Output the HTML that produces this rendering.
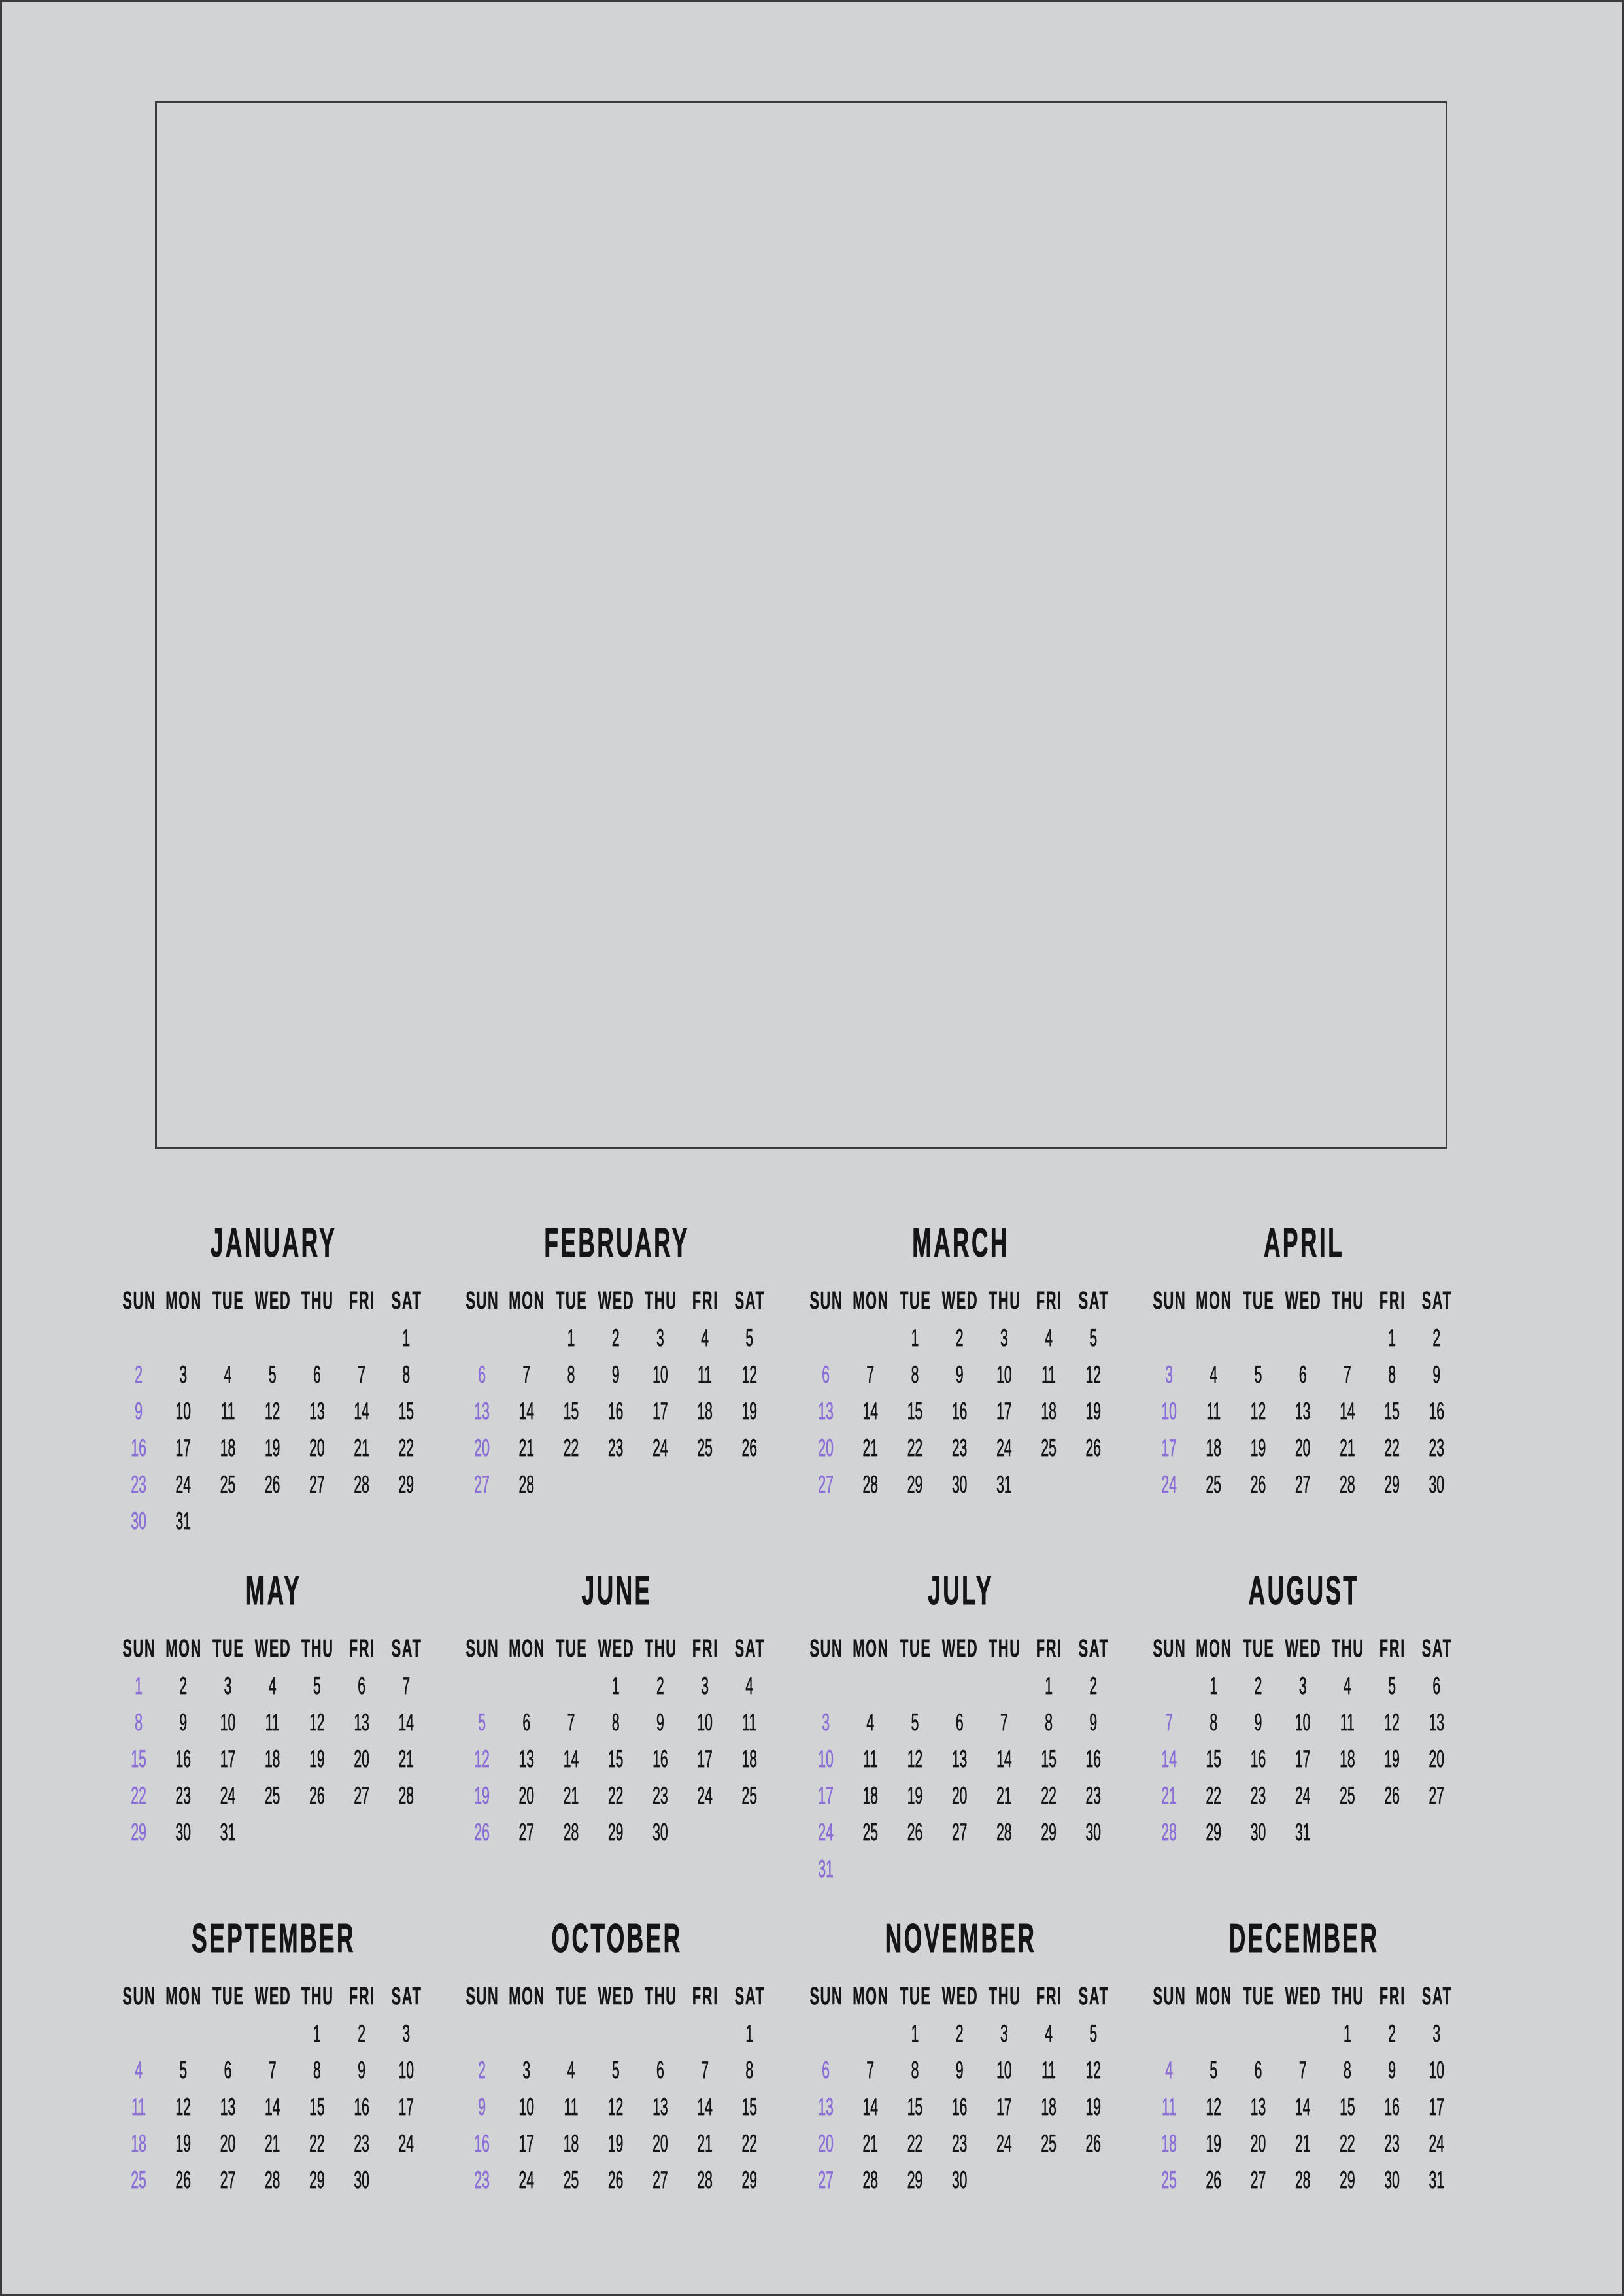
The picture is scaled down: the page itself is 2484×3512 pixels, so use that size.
<!DOCTYPE html>
<html><head><meta charset="utf-8"><style>
*{margin:0;padding:0;box-sizing:border-box}
html,body{width:2484px;height:3512px;overflow:hidden;background:#d2d3d5}
.page{position:absolute;left:0;top:0;width:2484px;height:3512px;border:3px solid #3a3a3c;background:#d2d3d5}
.photo{position:absolute;left:237px;top:155px;width:1977px;height:1603px;border:3px solid #3a3a3c}
.m{position:absolute;width:838px;transform:scaleX(0.57);transform-origin:0 0;font-family:"Liberation Sans",sans-serif;color:#151518}
.t{position:absolute;left:0;top:10.5px;width:838px;text-align:center;font-weight:bold;font-size:62px;line-height:62px;letter-spacing:6px;text-indent:6px;-webkit-text-stroke:1px #151518}
.h{position:absolute;left:0;top:110.5px;display:flex;font-weight:bold;font-size:38px;line-height:38px;-webkit-text-stroke:0.6px #151518}
.h span{width:119.65px;text-align:center;flex:none;letter-spacing:3px;text-indent:3px}
.d{position:absolute;left:0;top:159px;font-size:37px;line-height:56px}
.r{display:flex;height:56px}
.r>*{width:119.65px;flex:none;text-align:center;font-style:normal;font-weight:normal;-webkit-text-stroke:0.8px #151518}
.r>*:first-child{color:#8b6fd6;-webkit-text-stroke:0.8px #8b6fd6}
</style></head><body>
<div class="page"></div>
<div class="photo"></div>

<div class="m" style="left:178px;top:1860px"><div class="t">JANUARY</div>
<div class="h"><span>SUN</span><span>MON</span><span>TUE</span><span>WED</span><span>THU</span><span>FRI</span><span>SAT</span></div>
<div class="d">
<div class="r"><b></b><b></b><b></b><b></b><b></b><b></b><span>1</span></div>
<div class="r"><span>2</span><span>3</span><span>4</span><span>5</span><span>6</span><span>7</span><span>8</span></div>
<div class="r"><span>9</span><span>10</span><span>11</span><span>12</span><span>13</span><span>14</span><span>15</span></div>
<div class="r"><span>16</span><span>17</span><span>18</span><span>19</span><span>20</span><span>21</span><span>22</span></div>
<div class="r"><span>23</span><span>24</span><span>25</span><span>26</span><span>27</span><span>28</span><span>29</span></div>
<div class="r"><span>30</span><span>31</span></div>
</div></div>

<div class="m" style="left:703px;top:1860px"><div class="t">FEBRUARY</div>
<div class="h"><span>SUN</span><span>MON</span><span>TUE</span><span>WED</span><span>THU</span><span>FRI</span><span>SAT</span></div>
<div class="d">
<div class="r"><b></b><b></b><span>1</span><span>2</span><span>3</span><span>4</span><span>5</span></div>
<div class="r"><span>6</span><span>7</span><span>8</span><span>9</span><span>10</span><span>11</span><span>12</span></div>
<div class="r"><span>13</span><span>14</span><span>15</span><span>16</span><span>17</span><span>18</span><span>19</span></div>
<div class="r"><span>20</span><span>21</span><span>22</span><span>23</span><span>24</span><span>25</span><span>26</span></div>
<div class="r"><span>27</span><span>28</span></div>
</div></div>

<div class="m" style="left:1229px;top:1860px"><div class="t">MARCH</div>
<div class="h"><span>SUN</span><span>MON</span><span>TUE</span><span>WED</span><span>THU</span><span>FRI</span><span>SAT</span></div>
<div class="d">
<div class="r"><b></b><b></b><span>1</span><span>2</span><span>3</span><span>4</span><span>5</span></div>
<div class="r"><span>6</span><span>7</span><span>8</span><span>9</span><span>10</span><span>11</span><span>12</span></div>
<div class="r"><span>13</span><span>14</span><span>15</span><span>16</span><span>17</span><span>18</span><span>19</span></div>
<div class="r"><span>20</span><span>21</span><span>22</span><span>23</span><span>24</span><span>25</span><span>26</span></div>
<div class="r"><span>27</span><span>28</span><span>29</span><span>30</span><span>31</span></div>
</div></div>

<div class="m" style="left:1754px;top:1860px"><div class="t">APRIL</div>
<div class="h"><span>SUN</span><span>MON</span><span>TUE</span><span>WED</span><span>THU</span><span>FRI</span><span>SAT</span></div>
<div class="d">
<div class="r"><b></b><b></b><b></b><b></b><b></b><span>1</span><span>2</span></div>
<div class="r"><span>3</span><span>4</span><span>5</span><span>6</span><span>7</span><span>8</span><span>9</span></div>
<div class="r"><span>10</span><span>11</span><span>12</span><span>13</span><span>14</span><span>15</span><span>16</span></div>
<div class="r"><span>17</span><span>18</span><span>19</span><span>20</span><span>21</span><span>22</span><span>23</span></div>
<div class="r"><span>24</span><span>25</span><span>26</span><span>27</span><span>28</span><span>29</span><span>30</span></div>
</div></div>

<div class="m" style="left:178px;top:2392px"><div class="t">MAY</div>
<div class="h"><span>SUN</span><span>MON</span><span>TUE</span><span>WED</span><span>THU</span><span>FRI</span><span>SAT</span></div>
<div class="d">
<div class="r"><span>1</span><span>2</span><span>3</span><span>4</span><span>5</span><span>6</span><span>7</span></div>
<div class="r"><span>8</span><span>9</span><span>10</span><span>11</span><span>12</span><span>13</span><span>14</span></div>
<div class="r"><span>15</span><span>16</span><span>17</span><span>18</span><span>19</span><span>20</span><span>21</span></div>
<div class="r"><span>22</span><span>23</span><span>24</span><span>25</span><span>26</span><span>27</span><span>28</span></div>
<div class="r"><span>29</span><span>30</span><span>31</span></div>
</div></div>

<div class="m" style="left:703px;top:2392px"><div class="t">JUNE</div>
<div class="h"><span>SUN</span><span>MON</span><span>TUE</span><span>WED</span><span>THU</span><span>FRI</span><span>SAT</span></div>
<div class="d">
<div class="r"><b></b><b></b><b></b><span>1</span><span>2</span><span>3</span><span>4</span></div>
<div class="r"><span>5</span><span>6</span><span>7</span><span>8</span><span>9</span><span>10</span><span>11</span></div>
<div class="r"><span>12</span><span>13</span><span>14</span><span>15</span><span>16</span><span>17</span><span>18</span></div>
<div class="r"><span>19</span><span>20</span><span>21</span><span>22</span><span>23</span><span>24</span><span>25</span></div>
<div class="r"><span>26</span><span>27</span><span>28</span><span>29</span><span>30</span></div>
</div></div>

<div class="m" style="left:1229px;top:2392px"><div class="t">JULY</div>
<div class="h"><span>SUN</span><span>MON</span><span>TUE</span><span>WED</span><span>THU</span><span>FRI</span><span>SAT</span></div>
<div class="d">
<div class="r"><b></b><b></b><b></b><b></b><b></b><span>1</span><span>2</span></div>
<div class="r"><span>3</span><span>4</span><span>5</span><span>6</span><span>7</span><span>8</span><span>9</span></div>
<div class="r"><span>10</span><span>11</span><span>12</span><span>13</span><span>14</span><span>15</span><span>16</span></div>
<div class="r"><span>17</span><span>18</span><span>19</span><span>20</span><span>21</span><span>22</span><span>23</span></div>
<div class="r"><span>24</span><span>25</span><span>26</span><span>27</span><span>28</span><span>29</span><span>30</span></div>
<div class="r"><span>31</span></div>
</div></div>

<div class="m" style="left:1754px;top:2392px"><div class="t">AUGUST</div>
<div class="h"><span>SUN</span><span>MON</span><span>TUE</span><span>WED</span><span>THU</span><span>FRI</span><span>SAT</span></div>
<div class="d">
<div class="r"><b></b><span>1</span><span>2</span><span>3</span><span>4</span><span>5</span><span>6</span></div>
<div class="r"><span>7</span><span>8</span><span>9</span><span>10</span><span>11</span><span>12</span><span>13</span></div>
<div class="r"><span>14</span><span>15</span><span>16</span><span>17</span><span>18</span><span>19</span><span>20</span></div>
<div class="r"><span>21</span><span>22</span><span>23</span><span>24</span><span>25</span><span>26</span><span>27</span></div>
<div class="r"><span>28</span><span>29</span><span>30</span><span>31</span></div>
</div></div>

<div class="m" style="left:178px;top:2924px"><div class="t">SEPTEMBER</div>
<div class="h"><span>SUN</span><span>MON</span><span>TUE</span><span>WED</span><span>THU</span><span>FRI</span><span>SAT</span></div>
<div class="d">
<div class="r"><b></b><b></b><b></b><b></b><span>1</span><span>2</span><span>3</span></div>
<div class="r"><span>4</span><span>5</span><span>6</span><span>7</span><span>8</span><span>9</span><span>10</span></div>
<div class="r"><span>11</span><span>12</span><span>13</span><span>14</span><span>15</span><span>16</span><span>17</span></div>
<div class="r"><span>18</span><span>19</span><span>20</span><span>21</span><span>22</span><span>23</span><span>24</span></div>
<div class="r"><span>25</span><span>26</span><span>27</span><span>28</span><span>29</span><span>30</span></div>
</div></div>

<div class="m" style="left:703px;top:2924px"><div class="t">OCTOBER</div>
<div class="h"><span>SUN</span><span>MON</span><span>TUE</span><span>WED</span><span>THU</span><span>FRI</span><span>SAT</span></div>
<div class="d">
<div class="r"><b></b><b></b><b></b><b></b><b></b><b></b><span>1</span></div>
<div class="r"><span>2</span><span>3</span><span>4</span><span>5</span><span>6</span><span>7</span><span>8</span></div>
<div class="r"><span>9</span><span>10</span><span>11</span><span>12</span><span>13</span><span>14</span><span>15</span></div>
<div class="r"><span>16</span><span>17</span><span>18</span><span>19</span><span>20</span><span>21</span><span>22</span></div>
<div class="r"><span>23</span><span>24</span><span>25</span><span>26</span><span>27</span><span>28</span><span>29</span></div>
</div></div>

<div class="m" style="left:1229px;top:2924px"><div class="t">NOVEMBER</div>
<div class="h"><span>SUN</span><span>MON</span><span>TUE</span><span>WED</span><span>THU</span><span>FRI</span><span>SAT</span></div>
<div class="d">
<div class="r"><b></b><b></b><span>1</span><span>2</span><span>3</span><span>4</span><span>5</span></div>
<div class="r"><span>6</span><span>7</span><span>8</span><span>9</span><span>10</span><span>11</span><span>12</span></div>
<div class="r"><span>13</span><span>14</span><span>15</span><span>16</span><span>17</span><span>18</span><span>19</span></div>
<div class="r"><span>20</span><span>21</span><span>22</span><span>23</span><span>24</span><span>25</span><span>26</span></div>
<div class="r"><span>27</span><span>28</span><span>29</span><span>30</span></div>
</div></div>

<div class="m" style="left:1754px;top:2924px"><div class="t">DECEMBER</div>
<div class="h"><span>SUN</span><span>MON</span><span>TUE</span><span>WED</span><span>THU</span><span>FRI</span><span>SAT</span></div>
<div class="d">
<div class="r"><b></b><b></b><b></b><b></b><span>1</span><span>2</span><span>3</span></div>
<div class="r"><span>4</span><span>5</span><span>6</span><span>7</span><span>8</span><span>9</span><span>10</span></div>
<div class="r"><span>11</span><span>12</span><span>13</span><span>14</span><span>15</span><span>16</span><span>17</span></div>
<div class="r"><span>18</span><span>19</span><span>20</span><span>21</span><span>22</span><span>23</span><span>24</span></div>
<div class="r"><span>25</span><span>26</span><span>27</span><span>28</span><span>29</span><span>30</span><span>31</span></div>
</div></div>

</body></html>
